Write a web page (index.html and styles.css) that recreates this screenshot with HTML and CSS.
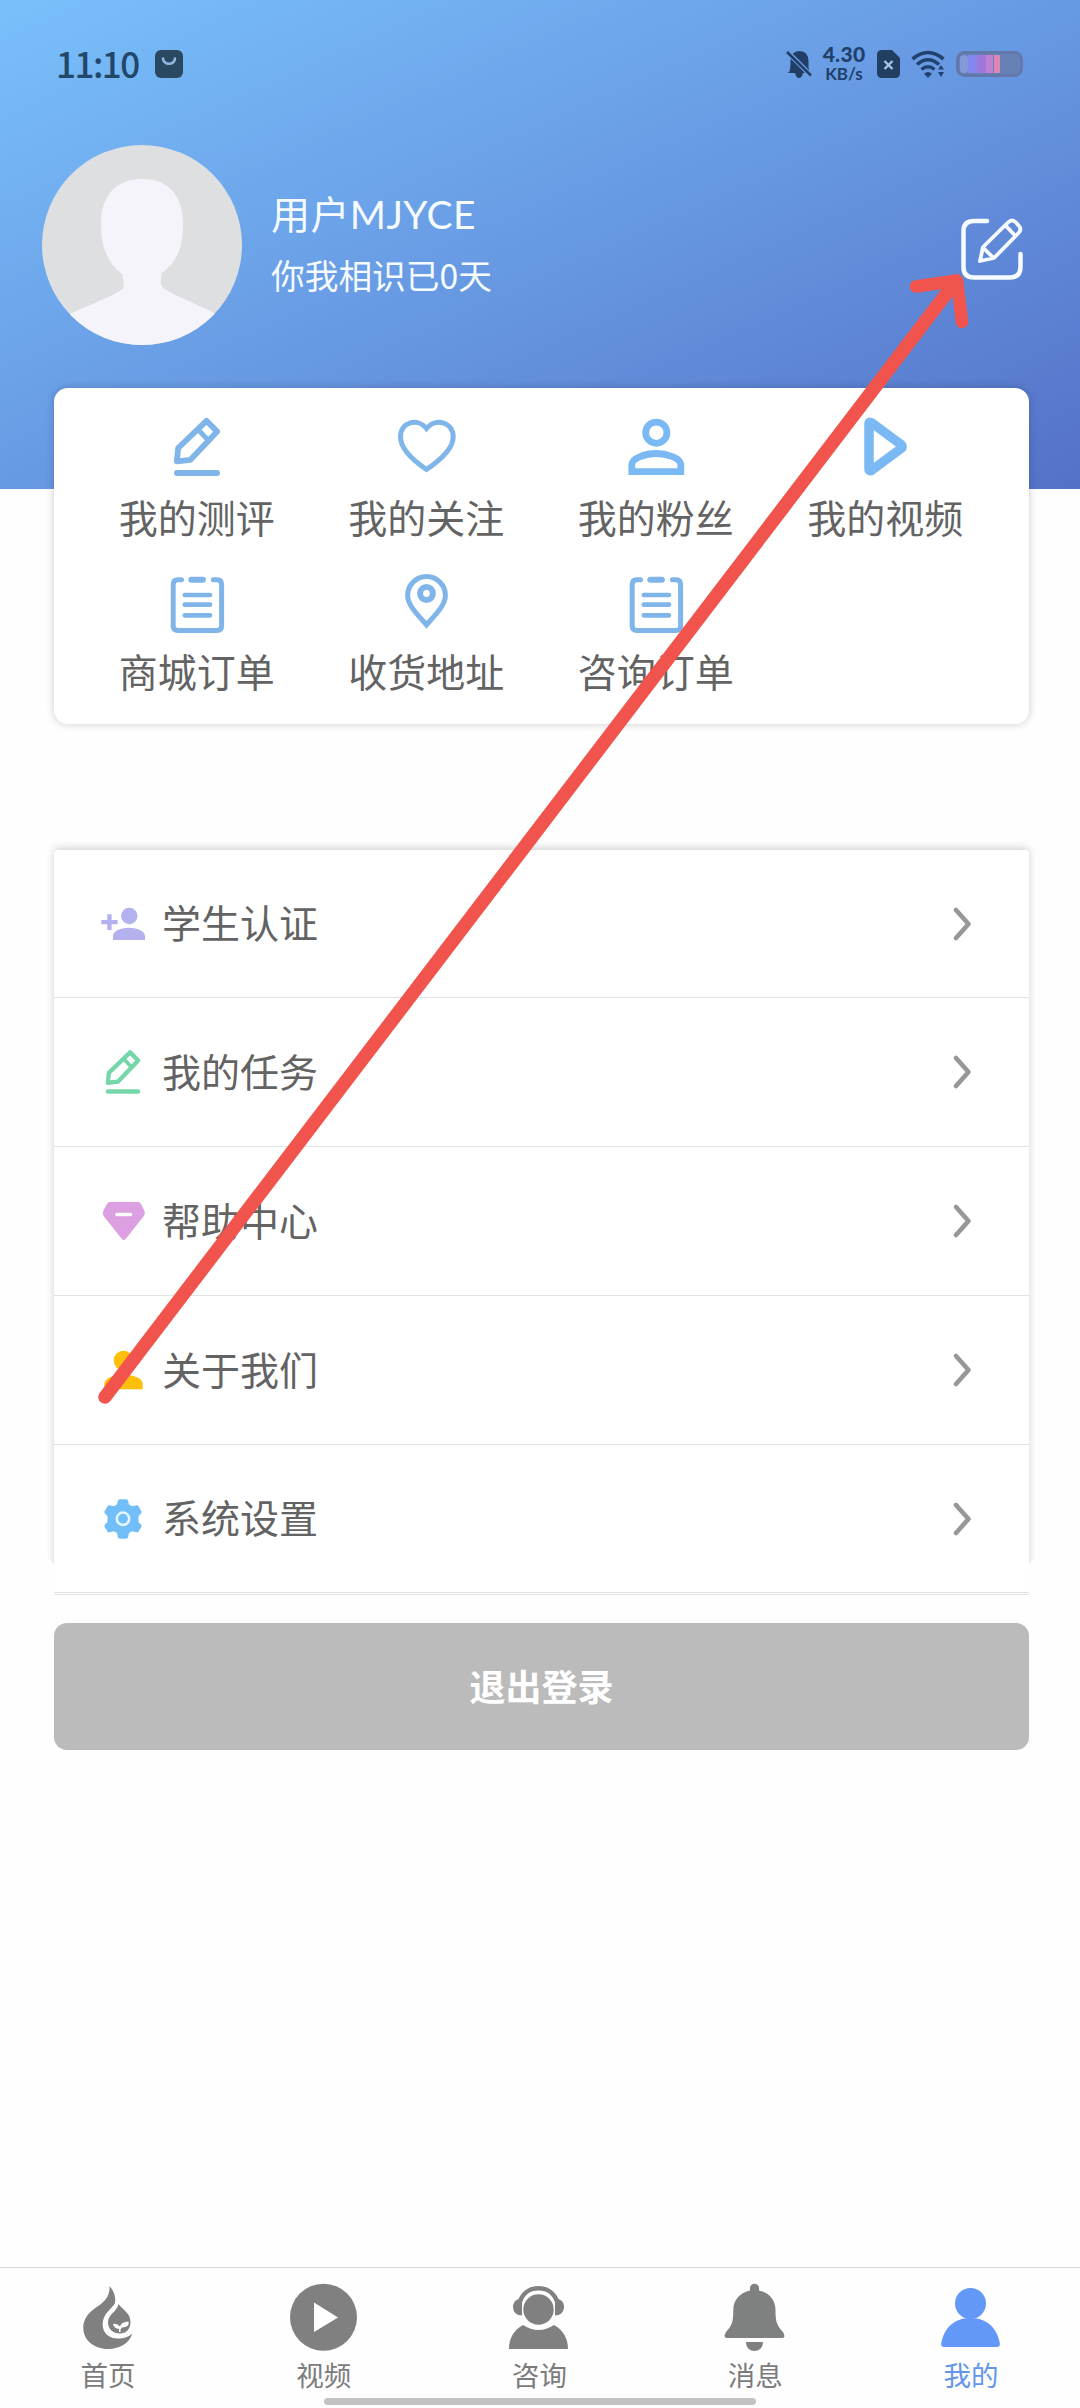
FILE: index.html
```html
<!DOCTYPE html>
<html lang="zh-CN">
<head>
<meta charset="utf-8">
<title>我的</title>
<link rel="stylesheet" href="styles.css">
</head>
<body>
<svg class="defs" aria-hidden="true">
  <symbol id="pencil" viewBox="0 0 64 64"><g fill="none" stroke="currentColor" stroke-linecap="round" stroke-linejoin="round"><path stroke-width="5.8" d="M11.8 46.3 13.2 33 41.5 5.8 52.2 16.6 25.5 44.8Z"/><path stroke-width="5" stroke-linecap="butt" d="M33 14.5 43 25"/><path stroke-width="6" d="M12 58H52"/></g></symbol>
  <symbol id="clipboard" viewBox="0 0 64 64"><g fill="none" stroke="currentColor" stroke-width="5" stroke-linecap="round" stroke-linejoin="round"><path d="M16.5 10.7H13Q8.2 10.7 8.2 15.5V57Q8.2 61.5 13 61.5H52Q56.6 61.5 56.6 57V15.5Q56.6 10.7 52 10.7H48.3"/><path stroke-width="6" d="M26.3 10.7H37.9"/><path d="M19.8 26H45M19.8 35.7H45M19.8 46.3H45" stroke-width="4.7"/></g></symbol>
  <symbol id="chevron" viewBox="0 0 20 36"><path d="M4 4 16.5 18 4 32" fill="none" stroke="#979797" stroke-width="4.6" stroke-linecap="round" stroke-linejoin="round"/></symbol>
</svg>

<div class="screen">
  <header class="hero">
    <div class="status">
      <span class="time">11:10</span>
      <svg class="bag" viewBox="0 0 28 28"><rect width="28" height="28" rx="6" fill="#2b4861"/><path d="M8 8.5a6 5.3 0 0 0 12 0" fill="none" stroke="#8fb9df" stroke-width="2.6" stroke-linecap="round"/></svg>
      <div class="status-right">
        <svg width="26" height="29" viewBox="0 0 26 29"><path fill="#213f66" d="M3 22Q4.500 20 4.500 11Q5 1 13.500 1Q22 1 22.500 11V17Q22.500 20 25 23H17Q16 28 13 28T9 23H1.500Z"/><path d="M0 .5 25 25.500" stroke="#6b9fe5" stroke-width="5"/><path d="M1 2 25 25.500" stroke="#213f66" stroke-width="2.600"/></svg>
        <div class="speed"><b>4.30</b><span>KB/s</span></div>
        <svg class="sim" width="24" height="28" viewBox="0 0 24 28"><path fill="#213f60" d="M5 0H15L23 8V23Q23 28 18 28H5Q0 28 0 23V5Q0 0 5 0Z"/><path d="M7.500 11 15.500 19M15.500 11 7.500 19" stroke="#a6c3ec" stroke-width="2.400"/></svg>
        <svg class="wifi" width="35" height="28" viewBox="0 0 35 28"><g fill="none" stroke="#21416f" stroke-width="3.600"><path d="M1.500 9Q17 -4 32.500 9"/><path d="M6 14.500Q17 5 28 14.500"/><path d="M10.500 19.500Q17 14 23.500 19.500"/></g><path fill="#21416f" d="M13 23.500Q17 20.500 21 23.500L17 28ZM27 19.500 30 15 33 19.500ZM27 22 30 27 33 22Z"/></svg>
        <svg class="battery" width="67" height="26" viewBox="0 0 67 26"><rect x="1.500" y="1.500" width="64" height="23" rx="7" fill="#6681b5" stroke="#6278ab" stroke-width="3"/><rect x="4" y="4" width="8" height="18" rx="4" fill="#8299dc"/><path fill="#8487ed" d="M12 4h9v18h-9z"/><path fill="#a078dc" d="M21 4h9v18h-9z"/><path fill="#bf80d2" d="M30 4h7v18h-7z"/><path fill="#dd86b5" d="M38 4h6v18h-6z"/></svg>
      </div>
    </div>
    <div class="profile">
      <svg class="avatar" viewBox="0 0 200 200"><defs><clipPath id="round"><circle cx="100" cy="100" r="100"/></clipPath></defs><g clip-path="url(#round)"><rect width="200" height="200" fill="#dedfe1"/><path fill="#f4f4fa" d="M100 34C73 34 59 52 59 78C59 103 66 119 80 129Q84 142 79 145C68 153 43 161 26 170V200H176V170C158 160 132 151 121 143Q117 139 120 128C134 118 141 104 141 79C141 51 127 34 100 34Z"/></g></svg>
      <div class="who"><div class="name">用户MJYCE</div><div class="days">你我相识已0天</div></div>
      <svg class="edit" viewBox="0 0 62 62" fill="none" stroke="#f5fbff" stroke-width="4.500" stroke-linecap="round" stroke-linejoin="round"><path d="M26 3H13Q2.500 3 2.500 13V49Q2.500 59.500 13 59.500H49Q59.500 59.500 59.500 49V36"/><path stroke-width="3.800" d="M19 43 22 29 47 4.500Q51 .5 55 4.500L58 8Q61 11.500 57.500 15L33 40ZM44.500 7.500 54.500 18M22.500 30 32 39.500"/></svg>
    </div>
  </header>

  <main>
    <section class="card shortcuts">
      <a><svg class="ico"><use href="#pencil"/></svg><span>我的测评</span></a>
      <a><svg class="ico" viewBox="0 0 64 64"><path fill="none" stroke="currentColor" stroke-width="5" stroke-linejoin="miter" d="M32.500 54.500C20 46 6.500 34 6.500 22C6.500 6.500 24 2.500 32.500 13.500C41 2.500 59.200 6.500 59.200 22C59.200 34 45 46 32.500 54.500Z"/></svg><span>我的关注</span></a>
      <a class="bright"><svg class="ico" viewBox="0 0 64 64" fill="none" stroke="currentColor" stroke-width="6.800"><circle cx="32.300" cy="17.700" r="10.600"/><path d="M7.800 56.600V49.500C7.800 43 22 38.500 32.300 38.500S56.800 43 56.800 49.500V56.600Z"/></svg><span>我的粉丝</span></a>
      <a class="bright"><svg class="ico" viewBox="0 0 64 64"><path fill="none" stroke="currentColor" stroke-width="9.500" stroke-linejoin="round" d="M16 9Q16 6 19 8L48 29.500Q50.500 31.500 48 33.500L19 55Q16 57 16 53.500Z"/></svg><span>我的视频</span></a>
      <a><svg class="ico"><use href="#clipboard"/></svg><span>商城订单</span></a>
      <a><svg class="ico" viewBox="0 0 64 64" fill="none" stroke="currentColor"><path stroke-width="5" d="M32.500 55.800C26 48 13.600 37 13.600 26.500a18.900 18.900 0 0 1 37.800 0C51.400 37 39 48 32.500 55.800Z"/><circle cx="32.500" cy="24.500" r="6.400" stroke-width="6"/></svg><span>收货地址</span></a>
      <a><svg class="ico"><use href="#clipboard"/></svg><span>咨询订单</span></a>
    </section>

    <section class="menu">
      <a><svg class="mi" viewBox="0 0 48 48" fill="#b4b1ef"><circle cx="30.300" cy="16" r="8.200"/><path d="M14 40V36C14 30.500 23 27.700 30 27.700S46 30.500 46 36V40ZM8.300 14.300h4.300v5.700h6v4.300h-6v5.700H8.300v-5.700h-6V20h6Z"/></svg><span>学生认证</span><svg class="chev"><use href="#chevron"/></svg></a>
      <a><svg class="mi green"><use href="#pencil"/></svg><span>我的任务</span><svg class="chev"><use href="#chevron"/></svg></a>
      <a><svg class="mi" viewBox="0 0 48 48"><path fill="#dc9fe1" d="M11 5H39Q41 5 42 7L45.500 14Q46.500 17 44.500 19.500L27 41.500Q24.700 44.500 22.500 41.500L5 19.500Q3 17 4.300 14L8 7Q9 5 11 5Z"/><path d="M18 17.500H31.500" stroke="#fff" stroke-width="3.500" stroke-linecap="round"/></svg><span>帮助中心</span><svg class="chev"><use href="#chevron"/></svg></a>
      <a><svg class="mi" viewBox="0 0 48 48" fill="#fdbf0a"><circle cx="24.500" cy="14.500" r="9.800"/><path d="M5.300 43.300V38C5.300 32 16 28.500 24.500 28.500S43.700 32 43.700 38V43.300Z"/></svg><span>关于我们</span><svg class="chev"><use href="#chevron"/></svg></a>
      <a><svg class="mi" viewBox="0 0 48 48"><path fill="#72bef9" d="M21 4.300h6Q29 4.300 29.300 6.500L30 9.500 33 11.200 37.500 10.200Q38.800 10 39.500 11.200L42.300 16Q43 17.500 42 18.500L39.500 21V27L42 29.500Q43 30.500 42.300 32L39.500 36.500Q38.800 37.700 37.500 37.300L33 36.200 30 38 29.300 41.500Q29 43.700 27 43.700H21Q19 43.700 18.700 41.500L18 38 15 36.200 10.500 37.300Q9.200 37.700 8.500 36.500L5.700 32Q5 30.500 6 29.500L8.500 27V21L6 18.500Q5 17.500 5.700 16L8.500 11.200Q9.200 10 10.500 10.200L15 11.200 18 9.500 18.700 6.500Q19 4.300 21 4.300Z"/><circle cx="24" cy="23.700" r="6.200" fill="none" stroke="#e4f5ff" stroke-width="2.600"/></svg><span>系统设置</span><svg class="chev"><use href="#chevron"/></svg></a>
    </section>

    <button class="logout">退出登录</button>
  </main>

  <nav class="tabs">
    <a><svg viewBox="0 0 68 68" fill="#808080"><path d="M35.500 3C40 8 42 14 41 20C38 26 29 30 28.600 41C28.600 51 36 55.500 44 55.500C50 55.500 55 54 58.200 50.300C56 60 46 66 34 66C20 66 9.300 57 9.300 45C9.300 32 20 26 27 21C33 16 36 11 35.500 3Z"/><path d="M44.500 21C49 27 56.500 30 56.500 39C56.500 46 52 50.500 46 50.500C39 50.500 34 46 34 39.500C34 31 43 29 44.500 21Z"/><path fill="#fff" d="M39 41Q43 40 46 43.500Q47 39 54.500 38.500Q56 44 48 44.500L46.500 46.500V49H45V46Q40 45.500 39 41Z"/></svg><span>首页</span></a>
    <a><svg viewBox="0 0 68 68"><circle cx="33.500" cy="34.200" r="33.500" fill="#808080"/><path fill="#fff" d="M24 19.500 48 34.500 24 49Z"/></svg><span>视频</span></a>
    <a><svg viewBox="0 0 68 68" fill="#808080"><path d="M4 66C4 55 9 47 18 42Q33.500 52 49 42C58 47 63 55 63 66Z"/><circle cx="33.500" cy="26.500" r="15.200"/><path fill="none" stroke="#808080" stroke-width="4.500" d="M14.500 20C17 11 24 5.200 33.500 5.200S50 11 52.500 20"/><path d="M17 15.500C11 16 8 19 8 24S12 32.500 17 32.500ZM50 15.500C56 16 59 19 59 24S55 32.500 50 32.500Z"/></svg><span>咨询</span></a>
    <a><svg viewBox="0 0 68 68" fill="#7f8080"><path d="M33.500.7C36 .7 38 2.500 38 5V7.500C48 9.500 54.500 17 54.500 27C54.500 38 55.500 42 62 49Q65.500 55 60.500 55H6.500Q1.500 55 5 49C11.500 42 12.300 38 12.300 27C12.300 17 19 9.500 29 7.500V5C29 2.500 31 .7 33.500.7ZM25 59H42C42 71 25 71 25 59Z"/></svg><span>消息</span></a>
    <a class="on"><svg viewBox="0 0 68 68" fill="#6398f8"><circle cx="33.500" cy="20.500" r="15.500"/><path d="M33.500 35C51 35 60 46 62.800 60Q63.300 64 60 64H7Q3.700 64 4.200 60C7 46 16 35 33.500 35Z"/></svg><span>我的</span></a>
    <div class="home-bar"></div>
  </nav>

  <svg class="arrow" viewBox="0 0 1080 2408" fill="none" stroke="#f1544c" stroke-linecap="round" stroke-linejoin="round"><path stroke-width="13.500" d="M105 1397 956 281"/><path stroke-width="12.500" d="M916 286.500 957 280.500 962 322"/></svg>
</div>
</body>
</html>
```

FILE: styles.css
```css
* { box-sizing: border-box; }
body { margin: 0; background: #fefefe; font-family: "Noto Sans CJK SC", sans-serif; }
.defs { display: none; }
svg { display: block; flex: none; }
.screen { position: relative; width: 1080px; height: 2408px; display: flex; flex-direction: column; overflow: hidden; }

.hero { height: 489px; flex: none; background: linear-gradient(to bottom right, #79c0fb, #6798e2 52%, #5471c8); }
.status { height: 128px; padding: 0 57px 0 56px; display: flex; align-items: center; color: #21466f; }
.time { font-size: 35px; font-weight: 500; letter-spacing: -1.5px; line-height: 40px; width: 99px; padding-bottom: 3px; color: #234769; }
.bag { width: 28px; height: 28px; }
.status-right { margin-left: auto; display: flex; align-items: center; }
.speed { width: 48px; margin-left: 8px; display: flex; flex-direction: column; align-items: center; font-family: Lato, "Noto Sans", sans-serif; font-weight: 700; color: #213f69; }
.speed b { font-size: 21px; line-height: 20px; letter-spacing: .3px; }
.speed span { font-size: 17px; line-height: 20px; }
.sim { margin-left: 9px; }
.wifi { margin-left: 10px; }
.battery { margin-left: 10px; }

.profile { display: flex; align-items: center; padding: 17px 57px 0 42px; }
.avatar { width: 200px; height: 200px; }
.who { margin-left: 29px; color: #f5fbff; flex: 1; }
.name { font-family: Lato, "Noto Sans CJK SC", sans-serif; font-size: 39px; letter-spacing: .4px; line-height: 60px; }
.days { font-size: 33.700px; line-height: 62px; }
.edit { width: 62px; height: 62px; margin-top: 7px; overflow: visible; }

main { flex: 1; padding: 0 51px 0 54px; }
.card { background: #fff; border-radius: 14px; box-shadow: 0 0 9px rgba(0, 0, 0, .2); }
.shortcuts { position: relative; margin-top: -101px; height: 336px; padding: 27px 29px 0 28px; display: grid; grid-template-columns: repeat(4, 1fr); grid-auto-rows: 154px; color: #7fb5e8; }
.shortcuts a { display: flex; flex-direction: column; align-items: center; }
.ico { width: 64px; height: 64px; }
.shortcuts span, .menu span { font-size: 39px; line-height: 54px; color: #636363; }
.shortcuts span { margin-top: 10px; }
.bright { color: #7ab9f3; }

/* the side shadow stops short of the last row's bottom edge */
.menu {
  margin-top: 126px;
  height: 745px;
  border-radius: 4px 4px 0 0;
  background: #fff;
  box-shadow: 0 -2px 8px rgba(0, 0, 0, .18);
  clip-path: polygon(-12px -14px, calc(100% + 12px) -14px, calc(100% + 12px) 702px, 100% 714px, 100% 100%, 0 100%, 0 714px, -12px 702px);
  border-bottom: 1px solid #e4e4e4;
}
.menu a { height: 149px; padding: 0 57px 0 45px; display: flex; align-items: center; border-bottom: 1px solid #e2e2e2; }
.menu a:first-child, .menu a:last-child { height: 148px; }
.mi { width: 48px; height: 48px; }
.green { color: #75d7a9; }
.menu span { margin-left: 15px; flex: 1; padding-bottom: 5px; }
.chev { width: 20px; height: 36px; }

.logout { display: block; width: 100%; height: 127px; margin: 28px 0 0; padding: 0 0 4px; border: 0; border-radius: 13px; background: #bbb; color: #fff; font: 700 36px "Noto Sans CJK SC", sans-serif; }

.tabs { position: relative; height: 141px; flex: none; border-top: 1px solid #d8d8d8; padding: 15px 1px 0 0; display: flex; align-items: flex-start; }
.tabs a { flex: 1; display: flex; flex-direction: column; align-items: center; }
.tabs svg { width: 68px; height: 68px; }
.tabs span { margin-top: 5px; font-size: 27.500px; line-height: 36px; color: #7c7c7c; }
.tabs .on span { color: #6396ea; }
.home-bar { position: absolute; left: 324px; bottom: 3px; width: 432px; height: 7px; border-radius: 4px; background: #c2c2c2; }

.arrow { position: absolute; inset: 0; width: 1080px; height: 2408px; pointer-events: none; }
```
